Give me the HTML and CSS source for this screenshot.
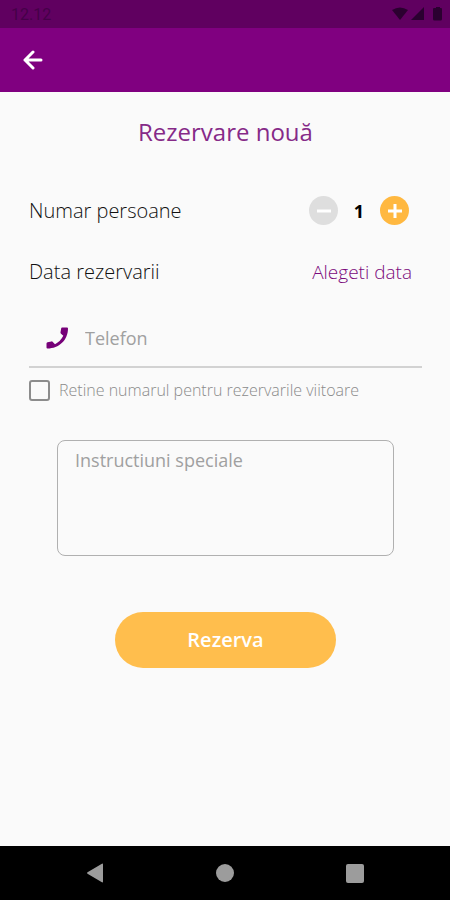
FILE: index.html
```html
<!DOCTYPE html>
<html lang="ro">
<head>
<meta charset="utf-8">
<meta name="viewport" content="width=device-width, initial-scale=1">
<title>Rezervare nouă</title>
<link rel="stylesheet" href="styles.css">
</head>
<body>
<div class="status-bar">
  <span>12.12</span>
  <svg class="status-icons" width="50" height="14" viewBox="0 0 50 14" aria-hidden="true">
    <path d="M0 3Q8-2 16 3L8 13Z"/>
    <path d="M32 0V13H19Z"/>
    <path d="M42 1h2V0h4v1h1q1 0 1 1v10q0 1.500-1.500 1.500h-6q-1.500 0-1.500-1.500V2q0-1 1-1z"/>
  </svg>
</div>
<header class="app-bar">
  <button class="back" type="button" aria-label="Inapoi">
    <svg width="20" height="20" viewBox="0 0 20 20"><path d="M18 10H2M10 2L2 10l8 8"/></svg>
  </button>
</header>
<main>
  <h1>Rezervare nouă</h1>
  <form>
    <div class="row">
      <span>Numar persoane</span>
      <div class="stepper">
        <button class="round minus" type="button" aria-label="Minus"><svg width="14" height="14" viewBox="0 0 14 14"><path d="M0 7h14"/></svg></button>
        <output>1</output>
        <button class="round plus" type="button" aria-label="Plus"><svg width="14" height="14" viewBox="0 0 14 14"><path d="M0 7h14M7 0v14"/></svg></button>
      </div>
    </div>
    <div class="row">
      <span>Data rezervarii</span>
      <button class="date" type="button">Alegeti data</button>
    </div>
    <label class="phone">
      <svg width="22" height="22" viewBox="0 0 22 22" aria-hidden="true"><path d="M16 0.500L21 0.500Q22 0.500 22 1.500C22 13 13 21.500 1.500 21.500Q0.500 21.500 0.500 20.500V16.500Q0.500 15.500 1.500 15.300L5.500 14.400Q6.200 14.200 6.800 14.900L9 17.200Q14.500 14.500 17.300 8.800L15 6.700Q14.300 6.100 14.500 5.300L15.200 1.300Q15.400 0.500 16 0.500Z"/></svg>
      <input type="tel" placeholder="Telefon" aria-label="Telefon">
    </label>
    <label class="remember">
      <input type="checkbox">
      <span>Retine numarul pentru rezervarile viitoare</span>
    </label>
    <textarea placeholder="Instructiuni speciale" aria-label="Instructiuni speciale"></textarea>
    <button class="submit" type="submit">Rezerva</button>
  </form>
</main>
<nav class="nav-bar">
  <button type="button" aria-label="Inapoi"><svg width="20" height="20" viewBox="0 0 20 20"><path d="M18 1.500V18.500Q18 20 16.500 19L2.500 10.800Q1.500 10 2.500 9.200L16.500 1Q18 0 18 1.500Z"/></svg></button>
  <button type="button" aria-label="Acasa"><svg width="20" height="20" viewBox="0 0 20 20"><circle cx="10" cy="10" r="9"/></svg></button>
  <button type="button" aria-label="Recente"><svg width="20" height="20" viewBox="0 0 20 20"><rect x="1" y="1" width="18" height="19" rx="2"/></svg></button>
</nav>
</body>
</html>
```
FILE: styles.css
```css
* { box-sizing: border-box; }

body {
  margin: 0;
  min-height: 100vh;
  display: flex;
  flex-direction: column;
  background: #fafafa;
  color: #111;
  font: 400 18px/24px "Open Sans", sans-serif;
}

button {
  padding: 0;
  border: 0;
  background: none;
  font: inherit;
  color: inherit;
}

svg { display: block; }

.status-bar {
  height: 28px;
  padding: 0 8px 0 11px;
  display: flex;
  align-items: center;
  justify-content: space-between;
  background: #600060;
  color: #450048;
  font: 400 16px/28px Roboto, sans-serif;
}

.status-bar span { padding-top: 2px; }

.status-icons { fill: #2b0030; }

.app-bar {
  height: 64px;
  padding: 0 23px;
  display: flex;
  align-items: center;
  background: #800080;
}

.back svg {
  fill: none;
  stroke: #fff;
  stroke-width: 3;
  stroke-linecap: round;
  stroke-linejoin: round;
}

main {
  flex: 1;
  padding: 20px 28px 20px 29px;
}

h1 {
  margin: 0 0 28px;
  text-align: center;
  color: #862a88;
  font-size: 24px;
  font-weight: 400;
  line-height: 40px;
}

form {
  display: flex;
  flex-direction: column;
}

.row {
  height: 61px;
  padding-right: 10px;
  display: flex;
  align-items: center;
  justify-content: space-between;
  font-size: 20px;
  font-weight: 300;
}

.stepper {
  padding-right: 3px;
  display: flex;
  align-items: center;
}

.stepper output {
  width: 42px;
  text-align: center;
  color: #000;
  font-size: 18px;
  font-weight: 700;
}

.round {
  width: 29px;
  height: 29px;
  display: grid;
  place-items: center;
  border-radius: 50%;
}

.round svg {
  fill: none;
  stroke: #fff;
  stroke-width: 3;
}

.minus { background: #dedede; }
.plus { background: #ffb840; }

.date {
  color: #7a0a7c;
  font-size: 19px;
}

.phone {
  height: 58px;
  margin-top: 8px;
  padding-left: 17px;
  display: flex;
  align-items: center;
  gap: 17px;
  border-bottom: 2px solid #d2d2d2;
}

.phone svg { fill: #760078; }

.phone input {
  flex: 1;
  min-width: 0;
  padding: 0;
  border: 0;
  outline: 0;
  background: none;
  font: inherit;
}

::placeholder {
  color: #a0a0a0;
  opacity: 1;
}

.remember {
  margin-top: 10px;
  display: flex;
  align-items: center;
  gap: 9px;
  color: #8a8a8a;
  font-size: 16px;
  font-weight: 300;
}

.remember input {
  appearance: none;
  width: 21px;
  height: 21px;
  margin: 0;
  border: 2px solid #8c8c8c;
  border-radius: 3px;
}

textarea {
  height: 116px;
  margin: 38px 28px 0;
  padding: 7px 17px;
  border: 1px solid #b0b0b0;
  border-radius: 8px;
  outline: 0;
  resize: none;
  background: none;
  font: inherit;
}

.submit {
  width: 56%;
  height: 56px;
  margin: 56px auto 0;
  border-radius: 28px;
  background: #ffbe4d;
  color: #fff;
  font-size: 20px;
  font-weight: 600;
}

.nav-bar {
  height: 54px;
  padding: 0 30px;
  display: grid;
  grid-template-columns: repeat(3, 1fr);
  align-items: center;
  background: #000;
}

.nav-bar button {
  display: grid;
  place-items: center;
}

.nav-bar svg { fill: #9c9c9c; }
```
